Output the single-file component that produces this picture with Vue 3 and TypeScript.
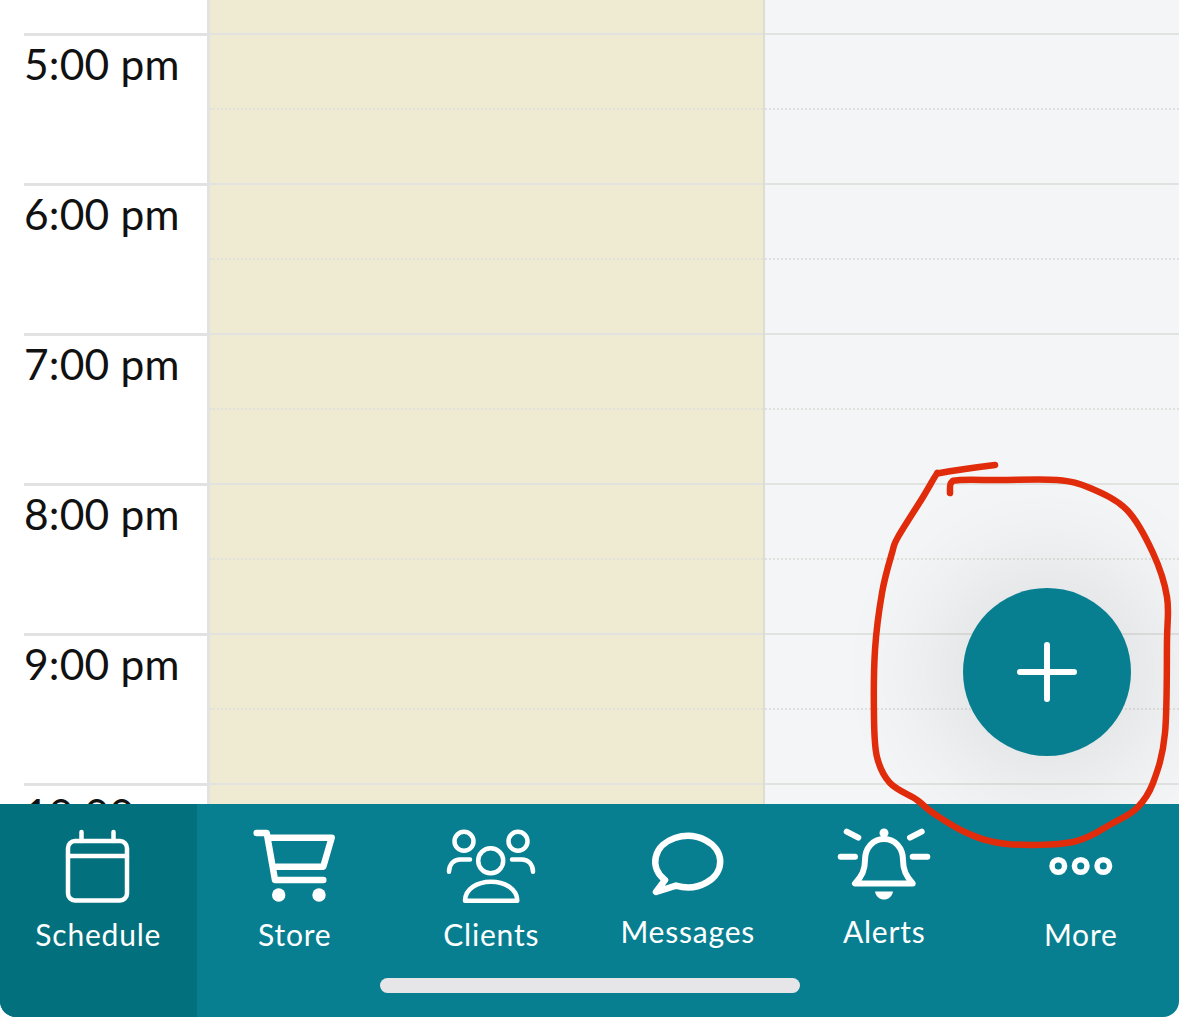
<script setup lang="ts">
const hours: string[] = ['5:00 pm', '6:00 pm', '7:00 pm', '8:00 pm', '9:00 pm', '10:00 pm']

const pts: [number, number][] = [
  [995, 465], [965, 469], [940, 473], [936, 475], [923, 497], [898, 537], [892, 553], [882, 593], [875, 650], [874, 717],
  [877, 757], [890, 783], [917, 800], [933, 813], [967, 833], [1007, 844], [1073, 842], [1113, 823],
  [1137, 808], [1153, 783], [1165, 733], [1167, 640], [1167, 597], [1153, 553], [1127, 510], [1090, 488],
  [1057, 480], [1000, 480], [960, 480], [951, 483], [950, 493],
]

function smooth(p: [number, number][]): string {
  let d = `M${p[0][0]} ${p[0][1]}`
  for (let i = 0; i < p.length - 1; i++) {
    const a = p[Math.max(i - 1, 0)]
    const b = p[i]
    const c = p[i + 1]
    const e = p[Math.min(i + 2, p.length - 1)]
    const c1x = b[0] + (c[0] - a[0]) / 6
    const c1y = b[1] + (c[1] - a[1]) / 6
    const c2x = c[0] - (e[0] - b[0]) / 6
    const c2y = c[1] - (e[1] - b[1]) / 6
    d += ` C${c1x.toFixed(1)} ${c1y.toFixed(1)} ${c2x.toFixed(1)} ${c2y.toFixed(1)} ${c[0]} ${c[1]}`
  }
  return d
}

const scribble = smooth(pts)
</script>

<template>
  <div class="page">
    <div class="calendar">
      <div class="row stub">
        <div class="time"></div>
        <div class="day closed"></div>
        <div class="day open"></div>
      </div>
      <div v-for="h in hours" :key="h" class="row">
        <div class="time"><div class="label">{{ h }}</div></div>
        <div class="day closed"><div class="half"></div><div class="half dotted"></div></div>
        <div class="day open"><div class="half"></div><div class="half dotted"></div></div>
      </div>
      <button class="fab" aria-label="Add">
        <svg width="60" height="60" viewBox="0 0 60 60">
          <path d="M3 30H57M30 3V57" stroke="#fff" stroke-width="6" stroke-linecap="round" />
        </svg>
      </button>
    </div>

    <nav class="bar">
      <div class="tab active">
        <svg class="icon" viewBox="0 0 80 80" fill="none" stroke="#fff" stroke-width="4.5" stroke-linecap="round">
          <rect x="10" y="15" width="59" height="59.500" rx="7" />
          <path d="M10 30H69M23.500 6V15M55.500 6V15" />
        </svg>
        <span class="name">Schedule</span>
      </div>
      <div class="tab">
        <svg class="icon" viewBox="0 0 80 80" fill="none" stroke="#fff" stroke-width="6.500" stroke-linecap="round" stroke-linejoin="round">
          <path d="M1.700 7H11.700L20 54H68.300" />
          <path d="M13.300 11.700H76.700L68.300 40.700H21.700" />
          <circle cx="23.700" cy="69" r="6.700" fill="#fff" stroke="none" />
          <circle cx="64" cy="69" r="6.700" fill="#fff" stroke="none" />
        </svg>
        <span class="name">Store</span>
      </div>
      <div class="tab">
        <svg class="icon" viewBox="0 0 80 80" fill="none" stroke="#fff" stroke-width="4.500" stroke-linecap="round" stroke-linejoin="round">
          <circle cx="39.700" cy="34.700" r="12.500" />
          <circle cx="13" cy="15.300" r="9.500" />
          <circle cx="67" cy="15.300" r="9.500" />
          <path d="M14 74.700C14 63 26 55.700 40 55.700C54 55.700 66.300 63 66.300 74.700Z" />
          <path d="M-2 45.700C-2 38 3 33.500 9 33.500H19" />
          <path d="M82 45.700C82 38 77 33.500 71 33.500H61" />
        </svg>
        <span class="name">Clients</span>
      </div>
      <div class="tab raised">
        <svg class="icon" viewBox="0 0 80 80" fill="none" stroke="#fff" stroke-width="6.500" stroke-linecap="round" stroke-linejoin="round">
          <path d="M28 59.600A32.500 25.700 0 1 0 17 54L8 66Z" />
        </svg>
        <span class="name">Messages</span>
      </div>
      <div class="tab raised">
        <svg class="icon" viewBox="0 0 80 80" fill="none" stroke="#fff" stroke-width="6" stroke-linecap="round" stroke-linejoin="round">
          <path d="M11 57.500H68.700C62 50 59 44 59 34C59 22 51 13 40 13C29 13 21 22 21 34C21 44 18 50 11 57.500Z" />
          <path d="M2.700 5.700L14.300 11.700M77.700 5.700L66 11.700M-3.300 30.700H11M68.700 30.700H83.300" />
          <circle cx="40" cy="7" r="4.500" fill="#fff" stroke="none" />
          <path d="M31 65.500H49C48 71 44 73.500 40 73.500C36 73.500 32 71 31 65.500Z" fill="#fff" stroke="none" />
        </svg>
        <span class="name">Alerts</span>
      </div>
      <div class="tab">
        <svg class="icon" viewBox="0 0 80 80" fill="none" stroke="#fff" stroke-width="5.500">
          <circle cx="17.300" cy="40" r="6.300" />
          <circle cx="39.700" cy="40" r="6.300" />
          <circle cx="62.300" cy="40" r="6.300" />
        </svg>
        <span class="name">More</span>
      </div>
      <div class="home"></div>
    </nav>

    <svg class="scribble" width="1179" height="1017" viewBox="0 0 1179 1017" fill="none">
      <path :d="scribble" stroke="#e02c0b" stroke-width="6.500" stroke-linecap="round" stroke-linejoin="round" />
    </svg>
  </div>
</template>

<style scoped>
.page {
  position: relative;
  display: flex;
  flex-direction: column;
  width: 1179px;
  height: 1017px;
  overflow: hidden;
  background: #fff;
  font-family: "Lato", "Noto Sans", sans-serif;
}
.calendar {
  position: relative;
  flex: 0 0 804px;
  overflow: hidden;
  background: #fff;
}
.row {
  display: grid;
  grid-template-columns: 210px 555px 1fr;
  height: 150px;
}
.stub {
  height: 33px;
}
.time {
  border-right: 3px solid #e2e2e0;
  box-sizing: border-box;
}
.label {
  margin-left: 24px;
  height: 100%;
  box-sizing: border-box;
  border-top: 3px solid #e2e2e2;
  padding: 2px 0 0;
  font-size: 42.500px;
  letter-spacing: 0.2px;
  line-height: 52px;
  color: #111;
  white-space: nowrap;
}
.day {
  box-sizing: border-box;
}
.closed {
  background: #efebd2;
  border-right: 2px solid #deddd2;
}
.open {
  background: #f4f5f7;
}
.half {
  height: 75px;
  box-sizing: border-box;
  border-top: 2px solid #e2e2e0;
}
.half.dotted {
  border-top: 2px dotted #e0e0dc;
}
.fab {
  position: absolute;
  top: 588px;
  right: 48px;
  display: flex;
  align-items: center;
  justify-content: center;
  width: 168px;
  height: 168px;
  padding: 0;
  border: none;
  border-radius: 50%;
  background: #087f91;
  box-shadow: 0 0 110px 30px rgba(0, 0, 0, 0.085);
}
.bar {
  position: relative;
  flex: 1;
  display: grid;
  grid-template-columns: repeat(6, 1fr);
  border-radius: 0 0 16px 16px;
  background: #087f91;
  overflow: hidden;
}
.tab {
  display: flex;
  flex-direction: column;
  align-items: center;
  padding-top: 22px;
  color: #fff;
}
.tab.active {
  background: #03707e;
}
.icon {
  display: block;
  width: 80px;
  height: 80px;
  overflow: visible;
}
.name {
  margin-top: 10px;
  font-size: 30px;
  letter-spacing: 0.8px;
  line-height: 36px;
  white-space: nowrap;
}
.raised .name {
  margin-top: 7px;
}
.home {
  position: absolute;
  left: 380px;
  bottom: 24px;
  width: 420px;
  height: 15px;
  border-radius: 8px;
  background: #e6e6e8;
}
.scribble {
  position: absolute;
  left: 0;
  top: 0;
  pointer-events: none;
}
</style>
